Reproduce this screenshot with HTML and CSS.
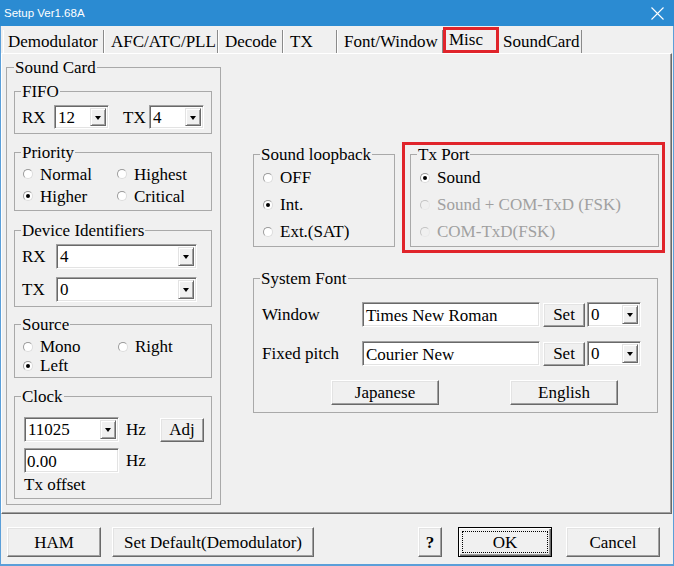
FILE: index.html
```html
<!DOCTYPE html>
<html lang="en">
<head>
<meta charset="utf-8">
<title>Setup Ver1.68A</title>
<link rel="stylesheet" href="styles.css">
</head>
<body>
<div class="window">
  <header class="titlebar">
    <span class="title">Setup Ver1.68A</span>
    <svg class="close" width="13" height="13" viewBox="0 0 13 13"><path d="M0.5 0.5 L12.5 12.5 M12.5 0.5 L0.5 12.5" stroke="#fff" stroke-width="1.1" fill="none"/></svg>
  </header>
  <div class="frame">
    <nav class="tabs">
      <div class="tab w-demod">Demodulator</div>
      <div class="tab w-afc">AFC/ATC/PLL</div>
      <div class="tab w-decode">Decode</div>
      <div class="tab w-tx">TX</div>
      <div class="tab w-font">Font/Window</div>
      <div class="tab tab-active">Misc</div>
      <div class="tab w-sound">SoundCard</div>
    </nav>
    <main class="panel">
      <fieldset class="grp soundcard">
        <legend>Sound Card</legend>
        <div class="sc-body">
          <fieldset class="grp sub">
            <legend>FIFO</legend>
            <div class="fifo-body">
              <span class="lbl w32">RX</span>
              <div class="combo c-fifo"><span class="val">12</span><span class="drop"></span></div>
              <span class="lbl w26 ml14">TX</span>
              <div class="combo c-fifo"><span class="val">4</span><span class="drop"></span></div>
            </div>
          </fieldset>
          <fieldset class="grp sub prio">
            <legend>Priority</legend>
            <div class="radio-grid prio-body">
              <div class="radio"><span class="rb"></span>Normal</div>
              <div class="radio"><span class="rb"></span>Highest</div>
              <div class="radio"><span class="rb on"></span>Higher</div>
              <div class="radio"><span class="rb"></span>Critical</div>
            </div>
          </fieldset>
          <fieldset class="grp sub devid">
            <legend>Device Identifiers</legend>
            <div class="dev-body">
              <div class="line">
                <span class="lbl w34">RX</span>
                <div class="combo c-dev"><span class="val">4</span><span class="drop"></span></div>
              </div>
              <div class="line mt8">
                <span class="lbl w34">TX</span>
                <div class="combo c-dev"><span class="val">0</span><span class="drop"></span></div>
              </div>
            </div>
          </fieldset>
          <fieldset class="grp sub source">
            <legend>Source</legend>
            <div class="radio-grid src-body">
              <div class="radio"><span class="rb"></span>Mono</div>
              <div class="radio"><span class="rb"></span>Right</div>
              <div class="radio"><span class="rb on"></span>Left</div>
            </div>
          </fieldset>
          <fieldset class="grp sub clock">
            <legend>Clock</legend>
            <div class="clock-body">
              <div class="line">
                <div class="combo c-clock"><span class="val">11025</span><span class="drop"></span></div>
                <span class="hz">Hz</span>
                <div class="btn b-adj">Adj</div>
              </div>
              <div class="line mt6">
                <div class="field f-clock">0.00</div>
                <span class="hz">Hz</span>
              </div>
              <div class="txoff">Tx offset</div>
            </div>
          </fieldset>
        </div>
      </fieldset>

      <div class="right">
        <div class="row1">
          <fieldset class="grp loop">
            <legend>Sound loopback</legend>
            <div class="loop-body">
              <div class="radio tall"><span class="rb"></span>OFF</div>
              <div class="radio tall"><span class="rb on"></span>Int.</div>
              <div class="radio tall"><span class="rb"></span>Ext.(SAT)</div>
            </div>
          </fieldset>
          <div class="txwrap">
            <fieldset class="grp txport">
              <legend>Tx Port</legend>
              <div class="loop-body">
                <div class="radio tall"><span class="rb on"></span>Sound</div>
                <div class="radio tall disabled"><span class="rb"></span>Sound + COM-TxD (FSK)</div>
                <div class="radio tall disabled"><span class="rb"></span>COM-TxD(FSK)</div>
              </div>
            </fieldset>
          </div>
        </div>
        <fieldset class="grp sysfont">
          <legend>System Font</legend>
          <div class="sf-body">
            <div class="line">
              <span class="lbl w100">Window</span>
              <div class="field f-font">Times New Roman</div>
              <div class="btn b-set">Set</div>
              <div class="combo c-size"><span class="val">0</span><span class="drop"></span></div>
            </div>
            <div class="line mt14">
              <span class="lbl w100">Fixed pitch</span>
              <div class="field f-font">Courier New</div>
              <div class="btn b-set">Set</div>
              <div class="combo c-size"><span class="val">0</span><span class="drop"></span></div>
            </div>
            <div class="line mt14">
              <div class="btn b-jp">Japanese</div>
              <div class="btn b-en">English</div>
            </div>
          </div>
        </fieldset>
      </div>
    </main>
    <footer class="bottombar">
      <div class="btn b-ham">HAM</div>
      <div class="btn b-def">Set Default(Demodulator)</div>
      <div class="btn b-help">?</div>
      <div class="btn b-ok"><span class="focus">OK</span></div>
      <div class="btn b-cancel">Cancel</div>
    </footer>
  </div>
</div>
</body>
</html>
```

FILE: styles.css
```css
* { box-sizing: border-box; }
html, body { margin: 0; padding: 0; }
body {
  width: 674px; height: 566px; overflow: hidden;
  background: #f0f0f0;
  font-family: "Liberation Serif", "Times New Roman", serif;
  font-size: 17px; line-height: 19px; color: #000;
}
.window { width: 674px; height: 566px; display: flex; flex-direction: column; }

.titlebar {
  height: 26px; flex: none;
  background: #2b8bd2; color: #fff;
  display: flex; align-items: center; justify-content: space-between;
  padding: 1px 10px 0 4px;
  font-family: "Liberation Sans", Arial, sans-serif; font-size: 11.5px;
}
.close { display: block; }

.frame {
  flex: 1; display: flex; flex-direction: column;
  border: 1px solid #5b9fd9; border-top: none; border-bottom-width: 2px;
  background: #f0f0f0;
}

.tabs { height: 27px; flex: none; display: flex; align-items: flex-end; padding-left: 2px; }
.tab {
  height: 23px; padding: 2px 0 0 6px; white-space: nowrap;
  border-left: 1px solid #fff; border-right: 1px solid #8a8a8a;
}
.w-demod { width: 101px; padding-left: 4px; }
.w-afc { width: 114px; }
.w-decode { width: 65px; }
.w-tx { width: 54px; }
.w-font { width: 106px; }
.tab-active { width: 56px; height: 26px; border: 3px solid #e0242b; padding: 0 0 0 3px; }
.w-sound { width: 83px; padding-left: 4px; border-left: none; }

.panel {
  height: 461px; flex: none; margin-right: 1px;
  display: flex; align-items: flex-start;
  padding: 4px 0 0 4px;
  border: 1px solid; border-color: #fff #696969 #696969 #fff;
  box-shadow: inset -1px -1px 0 #a0a0a0;
}

.grp { margin: 0; padding: 0; border: 1px solid #a9a9a9; min-width: 0; }
.grp > legend { padding: 0 1px; margin-left: 6px; line-height: 19px; height: 19px; }

.soundcard { width: 215px; flex: none; }
.soundcard > legend { margin-left: 7px; }
.sc-body { padding: 5px 8px 5px 7px; }
.sub { width: 198px; }

.lbl { display: inline-block; flex: none; }
.w32 { width: 32px; }
.w26 { width: 26px; }
.w34 { width: 34px; }
.w100 { width: 100px; }
.ml14 { margin-left: 14px; }
.mt6 { margin-top: 6px; }
.mt8 { margin-top: 8px; }
.mt14 { margin-top: 14px; }

.line { display: flex; align-items: center; }

.fifo-body { display: flex; align-items: center; padding: 4px 0 4px 7px; }

.combo {
  display: flex; align-items: stretch; flex: none;
  height: 25px; background: #fff; padding: 2px;
  border: 1px solid; border-color: #a0a0a0 #fff #fff #a0a0a0;
  box-shadow: inset 1px 1px 0 #696969, inset -1px -1px 0 #e3e3e3;
}
.combo .val { flex: 1; padding-left: 1px; display: flex; align-items: center; }
.combo .drop {
  width: 16px; flex: none; background: #f0f0f0;
  border: 1px solid; border-color: #e3e3e3 #696969 #696969 #e3e3e3;
  box-shadow: inset 1px 1px 0 #fff, inset -1px -1px 0 #a0a0a0;
  display: flex; align-items: center; justify-content: center;
}
.combo .drop::after {
  content: ""; width: 0; height: 0;
  border-left: 3.5px solid transparent; border-right: 3.5px solid transparent;
  border-top: 4px solid #000; margin-top: 1px;
}
.c-fifo { width: 55px; height: 24px; }
.c-dev { width: 141px; }
.c-clock { width: 95px; }
.c-size { width: 54px; margin-left: 2px; }

.field {
  flex: none; height: 25px; background: #fff; padding: 2px 2px 0 3px;
  display: flex; align-items: center;
  border: 1px solid; border-color: #a0a0a0 #fff #fff #a0a0a0;
  box-shadow: inset 1px 1px 0 #696969, inset -1px -1px 0 #e3e3e3;
}
.f-clock { width: 95px; padding-left: 2px; }
.f-font { width: 178px; }

.btn {
  flex: none; background: #f0f0f0;
  display: flex; align-items: center; justify-content: center;
  border: 1px solid; border-color: #fff #696969 #696969 #fff;
  box-shadow: inset -1px -1px 0 #a0a0a0, inset 1px 1px 0 #e3e3e3;
  white-space: nowrap;
}

.radio-grid { display: grid; }
.radio { display: flex; align-items: center; white-space: nowrap; }
.rb {
  width: 10px; height: 10px; border-radius: 50%; flex: none; margin-right: 7px;
  background: #fff;
  border: 1px solid; border-color: #9a9a9a #dcdcdc #dcdcdc #9a9a9a;
  display: flex; align-items: center; justify-content: center;
}
.rb.on::after { content: ""; width: 4px; height: 4px; border-radius: 50%; background: #000; }
.radio.disabled { color: #a0a0a0; }
.radio.disabled .rb { background: #f0f0f0; border-color: #c4c4c4 #e8e8e8 #e8e8e8 #c4c4c4; }

.prio { margin-top: 9px; }
.prio-body { grid-template-columns: 94px auto; grid-auto-rows: 22px; padding: 1px 0 3px 8px; }

.devid { margin-top: 10px; }
.dev-body { padding: 4px 0 4px 7px; }

.source { margin-top: 8px; }
.src-body { grid-template-columns: 95px auto; grid-auto-rows: 19px; padding: 3px 0 2px 8px; }

.clock { margin-top: 9px; }
.clock-body { padding: 11px 0 4px 9px; }
.hz { width: 34px; margin-left: 7px; flex: none; }
.b-adj { width: 44px; height: 24px; }
.txoff { margin-top: 2px; }

.right { margin-left: 32px; padding-top: 84px; display: flex; flex-direction: column; }
.row1 { display: flex; align-items: flex-start; }
.loop { width: 142px; margin-top: 3px; flex: none; }
.loop-body { padding: 0 0 1px 9px; }
.radio.tall { height: 27px; }
.txwrap { margin-left: 7px; border: 3px solid #e0242b; padding: 0 3px 3px 5px; }
.txport { width: 249px; }

.sysfont { width: 405px; margin-top: 16px; }
.sf-body { padding: 14px 0 7px 8px; }
.b-set { width: 42px; height: 24px; margin-left: 3px; }
.b-jp { width: 108px; height: 25px; margin-left: 69px; }
.b-en { width: 108px; height: 25px; margin-left: 71px; }

.bottombar { flex: 1; display: flex; align-items: flex-start; padding: 13px 0 0 6px; }
.bottombar .btn { height: 30px; }
.b-ham { width: 94px; }
.b-def { width: 202px; margin-left: 11px; }
.b-help { width: 24px; margin-left: 104px; font-weight: bold; }
.b-ok {
  width: 94px; margin-left: 16px; padding: 3px;
  border-color: #000;
  box-shadow: inset 1px 1px 0 #fff, inset -1px -1px 0 #696969, inset -2px -2px 0 #a0a0a0;
  align-items: stretch;
}
.b-ok .focus {
  flex: 1; border: 1px dotted #000;
  display: flex; align-items: center; justify-content: center;
}
.b-cancel { width: 94px; margin-left: 14px; }
```
